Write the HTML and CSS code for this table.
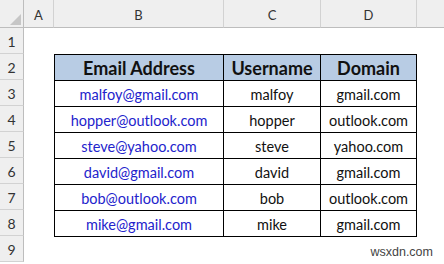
FILE: index.html
```html
<!DOCTYPE html>
<html>
<head>
<meta charset="utf-8">
<link rel="stylesheet" href="styles.css">
</head>
<body>
<div class="sheet">
  <div class="corner"><svg width="24" height="28" viewBox="0 0 24 28"><polygon points="21,14 21,25 10,25" fill="#c6c6c6"/></svg></div>
  <div class="colhead">A</div>
  <div class="colhead">B</div>
  <div class="colhead">C</div>
  <div class="colhead">D</div>
  <div class="colhead last"></div>

  <div class="rowhead">1</div>
  <div class="rowhead">2</div>
  <div class="rowhead">3</div>
  <div class="rowhead">4</div>
  <div class="rowhead">5</div>
  <div class="rowhead">6</div>
  <div class="rowhead">7</div>
  <div class="rowhead">8</div>
  <div class="rowhead">9</div>

  <div class="table">
    <div class="cell th first">Email Address</div>
    <div class="cell th">Username</div>
    <div class="cell th">Domain</div>

    <div class="cell email first">malfoy@gmail.com</div>
    <div class="cell">malfoy</div>
    <div class="cell">gmail.com</div>

    <div class="cell email first">hopper@outlook.com</div>
    <div class="cell">hopper</div>
    <div class="cell">outlook.com</div>

    <div class="cell email first">steve@yahoo.com</div>
    <div class="cell">steve</div>
    <div class="cell">yahoo.com</div>

    <div class="cell email first">david@gmail.com</div>
    <div class="cell">david</div>
    <div class="cell">gmail.com</div>

    <div class="cell email first">bob@outlook.com</div>
    <div class="cell">bob</div>
    <div class="cell">outlook.com</div>

    <div class="cell email first">mike@gmail.com</div>
    <div class="cell">mike</div>
    <div class="cell">gmail.com</div>
  </div>
</div>
<div class="watermark">wsxdn.com</div>
</body>
</html>
```
FILE: styles.css
```css
* { box-sizing: border-box; }
html, body {
  margin: 0;
  padding: 0;
  background: #ffffff;
  width: 444px;
  height: 264px;
  overflow: hidden;
  position: relative;
  font-family: Lato, "Liberation Sans", sans-serif;
}
.sheet {
  display: grid;
  grid-template-columns: 24px 30px 170px 97px 96px 27px;
  grid-template-rows: 28px repeat(9, 26px);
}
.corner {
  background: #efefef;
  border-right: 1px solid #bdbdbd;
  border-bottom: 1px solid #bdbdbd;
}
.corner svg { display: block; }
.colhead {
  background: #efefef;
  border-right: 1px solid #d2d2d2;
  border-bottom: 1px solid #bdbdbd;
  display: flex;
  align-items: flex-end;
  justify-content: center;
  padding-bottom: 4px;
  font-size: 13px;
  color: #333333;
}
.colhead.last { border-right: none; }
.rowhead {
  grid-column: 1;
  background: #efefef;
  border-right: 1px solid #bdbdbd;
  border-bottom: 1px solid #d2d2d2;
  display: flex;
  align-items: flex-end;
  justify-content: center;
  padding-bottom: 3px;
  font-size: 14px;
  color: #333333;
}
.table {
  grid-column: 3 / 6;
  grid-row: 3 / 10;
  display: grid;
  grid-template-columns: 170px 97px 96px;
  grid-template-rows: repeat(7, 26px);
  align-self: start;
  border-top: 1px solid #000;
}
.cell {
  border-right: 1px solid #000;
  border-bottom: 1px solid #000;
  display: flex;
  align-items: flex-end;
  justify-content: center;
  padding-bottom: 3px;
  font-size: 14.5px;
  color: #111111;
  white-space: nowrap;
}
.cell.first { border-left: 1px solid #000; }
.cell.th {
  background: #b8cce4;
  font-weight: bold;
  font-size: 18px;
  padding-bottom: 1px;
}
.cell.email { color: #2323cc; }
.watermark {
  position: absolute;
  right: 11px;
  bottom: 5px;
  font-family: "Liberation Sans", Arial, sans-serif;
  font-size: 12.5px;
  color: #444444;
}
```
